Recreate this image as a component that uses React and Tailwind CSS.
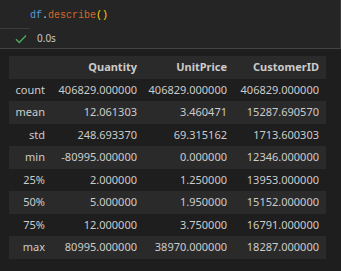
import React from "react";

const rows = [
  ["count", "406829.000000", "406829.000000", "406829.000000"],
  ["mean", "12.061303", "3.460471", "15287.690570"],
  ["std", "248.693370", "69.315162", "1713.600303"],
  ["min", "-80995.000000", "0.000000", "12346.000000"],
  ["25%", "2.000000", "1.250000", "13953.000000"],
  ["50%", "5.000000", "1.950000", "15152.000000"],
  ["75%", "12.000000", "3.750000", "16791.000000"],
  ["max", "80995.000000", "38970.000000", "18287.000000"],
];

const cols = "grid grid-cols-[43px_92px_90px_92px] h-[22.5px] items-center";

function App() {
  return (
    <div className="w-[341px] h-[271px] bg-[#1e1e1e] overflow-hidden" style={{ fontFamily: '"Noto Sans", sans-serif' }}>
      <div className="h-[49px] bg-[#252526] border-b border-[#444444] border-r border-r-[#3a3a3a] relative">
        <div className="pl-[30px] pt-[8px] h-[29px] text-[10px] leading-[16px]" style={{ fontFamily: '"Liberation Mono", monospace' }}>
          <span className="text-[#569cd6]">df</span>
          <span className="text-[#d4d4d4]">.</span>
          <span className="text-[#d7692a]">describe</span>
          <span className="text-[#ffd700]">()</span>
        </div>
        <div className="absolute left-0 top-[28px] w-[30px] h-px bg-[#3c3c3c]" />
        <div className="flex items-center h-[19px] pl-[15px] gap-[10px]">
          <svg width="12" height="10" viewBox="0 0 12 10" fill="none">
            <path d="M1 5.2 L4.3 8.5 L11 1.5" stroke="#4fae5a" strokeWidth="1.3" />
          </svg>
          <span className="text-[10px] text-[#c8c8c8]">0.0s</span>
        </div>
      </div>
      <div className="pl-[9px] pt-[7px] text-[11px] text-[#cccccc]">
        <div className={`${cols} bg-[#2a2a2a] font-bold w-[317px]`}>
          <div />
          <div className="text-right pr-[7px]">Quantity</div>
          <div className="text-right pr-[7px]">UnitPrice</div>
          <div className="text-right pr-[7px]">CustomerID</div>
        </div>
        {rows.map((r, i) => (
          <div key={r[0]} className={`${cols} w-[317px] ${i % 2 === 1 ? "bg-[#2a2a2a]" : "bg-[#1e1e1e]"}`}>
            {r.map((c, j) => (
              <div key={j} className="text-right pr-[7px] whitespace-nowrap">{c}</div>
            ))}
          </div>
        ))}
      </div>
    </div>
  );
}

export default App;
